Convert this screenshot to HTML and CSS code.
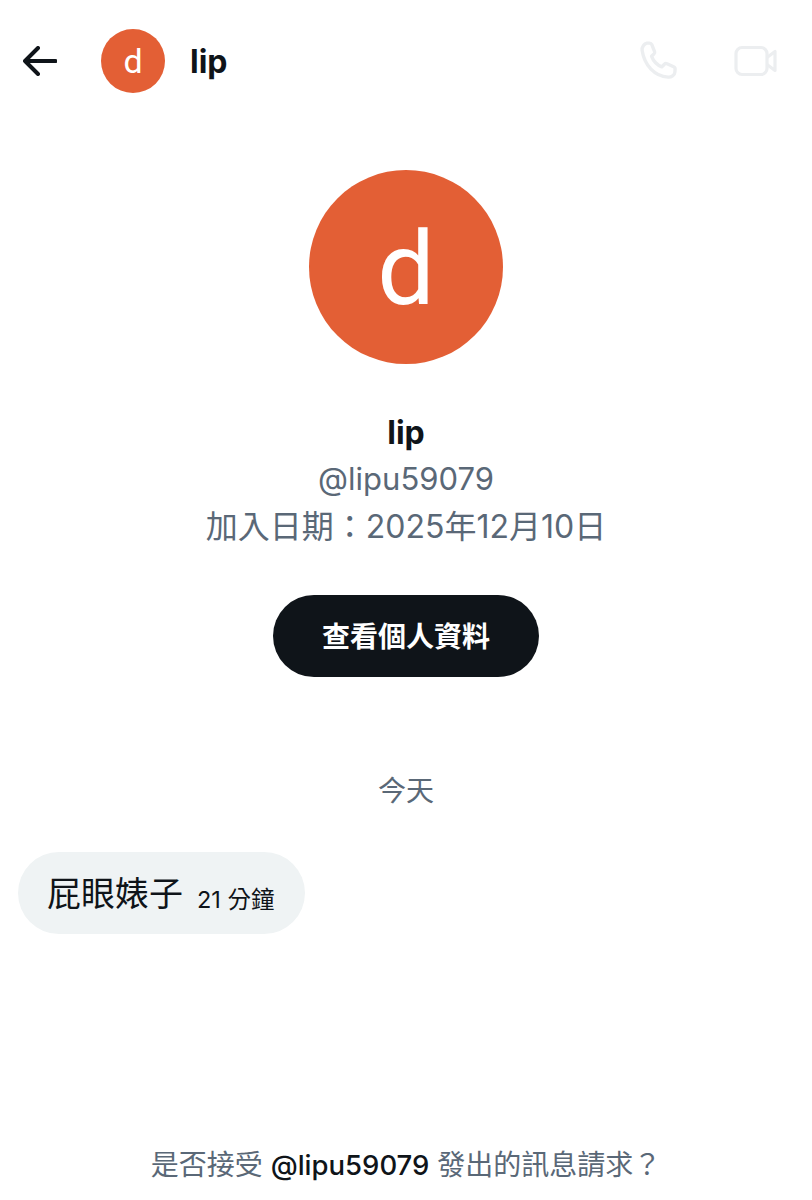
FILE: index.html
```html
<!DOCTYPE html>
<html lang="zh-Hant">
<head>
<meta charset="utf-8">
<title>lip</title>
<link rel="stylesheet" href="styles.css">
</head>
<body>
<div class="page">
  <header class="topbar">
    <svg class="back" viewBox="0 0 34 30" width="34" height="30" aria-hidden="true"><path d="M15 2 2 15l13 13M2 15h30.500" fill="none" stroke="#0f1419" stroke-width="4" stroke-linecap="round" stroke-linejoin="round"/></svg>
    <div class="avatar avatar-small">d</div>
    <div class="title">lip</div>
    <div class="actions">
      <svg class="phone" viewBox="0 0 38 38" width="40" height="40" aria-hidden="true"><path d="M3 9c-.6-3 2-6.500 4.500-7h2.500c1 0 1.800.6 2.200 1.500l2.600 6.500c.3.900.1 1.800-.6 2.400l-2.300 2c1.700 4.700 5 8.300 9.800 10.200l2.400-2.500c.6-.7 1.600-.9 2.500-.5l6.300 2.800c.9.400 1.500 1.300 1.400 2.300l-.2 2.800c-.2 3-3.500 5.200-6.500 4.800C14.500 33.500 5 22.500 3 9z" fill="none" stroke="#eceef0" stroke-width="3.200" stroke-linejoin="round"/></svg>
      <svg class="video" viewBox="0 0 43 32" width="43" height="32" aria-hidden="true"><rect x="2" y="2.500" width="31" height="27" rx="6" fill="none" stroke="#eceef0" stroke-width="3.200"/><path d="M33 12.500 41 6.500v19l-8-6" fill="none" stroke="#eceef0" stroke-width="3.200" stroke-linejoin="round"/></svg>
    </div>
  </header>

  <section class="profile">
    <div class="avatar avatar-large">d</div>
    <div class="name">lip</div>
    <div class="handle">@lipu59079</div>
    <div class="joined">加入日期：2025年12月10日</div>
    <div class="profile-btn">查看個人資料</div>
  </section>

  <div class="day">今天</div>

  <div class="bubble">
    <span class="bubble-text">屁眼婊子</span>
    <span class="bubble-time">21 分鐘</span>
  </div>

  <footer class="request">是否接受 <span class="request-handle">@lipu59079</span> 發出的訊息請求？</footer>
</div>
</body>
</html>
```

FILE: styles.css
```css
* { box-sizing: border-box; }
html, body { margin: 0; padding: 0; background: #fff; }
body {
  font-family: Inter, "Liberation Sans", "Noto Sans CJK TC", sans-serif;
  color: #0f1419;
}
.page {
  width: 812px;
  height: 1200px;
  display: flex;
  flex-direction: column;
  overflow: hidden;
}
.topbar {
  display: flex;
  align-items: center;
  height: 64px;
  margin-top: 29px;
  padding: 0 35px 0 23px;
}
.back { margin-right: 44px; flex: none; }
.avatar {
  border-radius: 50%;
  background: #e35f35;
  color: #fff;
  display: flex;
  align-items: center;
  justify-content: center;
  font-family: Roboto, "Liberation Sans", sans-serif;
  flex: none;
}
.avatar-small { width: 64px; height: 64px; font-size: 34px; }
.title { margin-left: 25px; font-size: 32px; font-weight: 700; }
.actions { margin-left: auto; display: flex; align-items: center; gap: 55px; }
.profile {
  display: flex;
  flex-direction: column;
  align-items: center;
  margin-top: 77px;
}
.avatar-large { width: 194px; height: 194px; font-size: 102px; padding-top: 4px; }
.name { margin-top: 49px; font-size: 32px; font-weight: 700; line-height: 40px; }
.handle { margin-top: 6px; font-size: 31px; line-height: 40px; color: #5a6877; }
.joined { margin-top: 8px; font-size: 32px; line-height: 40px; color: #5a6877; }
.profile-btn {
  margin-top: 48px;
  width: 266px;
  height: 82px;
  border-radius: 41px;
  padding-bottom: 3px;
  background: #0f1419;
  color: #fff;
  font-size: 28px;
  font-weight: 700;
  display: flex;
  align-items: center;
  justify-content: center;
}
.day {
  margin-top: 94px;
  text-align: center;
  font-size: 28px;
  line-height: 40px;
  color: #5a6877;
}
.bubble {
  margin: 41px 0 0 18px;
  align-self: flex-start;
  width: 287px;
  height: 82px;
  border-radius: 41px;
  background: #eff3f4;
  display: flex;
  align-items: center;
  gap: 14px;
  padding-left: 29px;
}
.bubble-text { font-size: 34px; margin-bottom: 4px; }
.bubble-time { font-size: 23.5px; margin-top: 10px; }
.request {
  margin-top: auto;
  margin-bottom: 15px;
  text-align: center;
  font-size: 28px;
  line-height: 40px;
  color: #5a6877;
}
.request-handle { color: #0f1419; font-weight: 500; font-size: 27.5px; }
```
